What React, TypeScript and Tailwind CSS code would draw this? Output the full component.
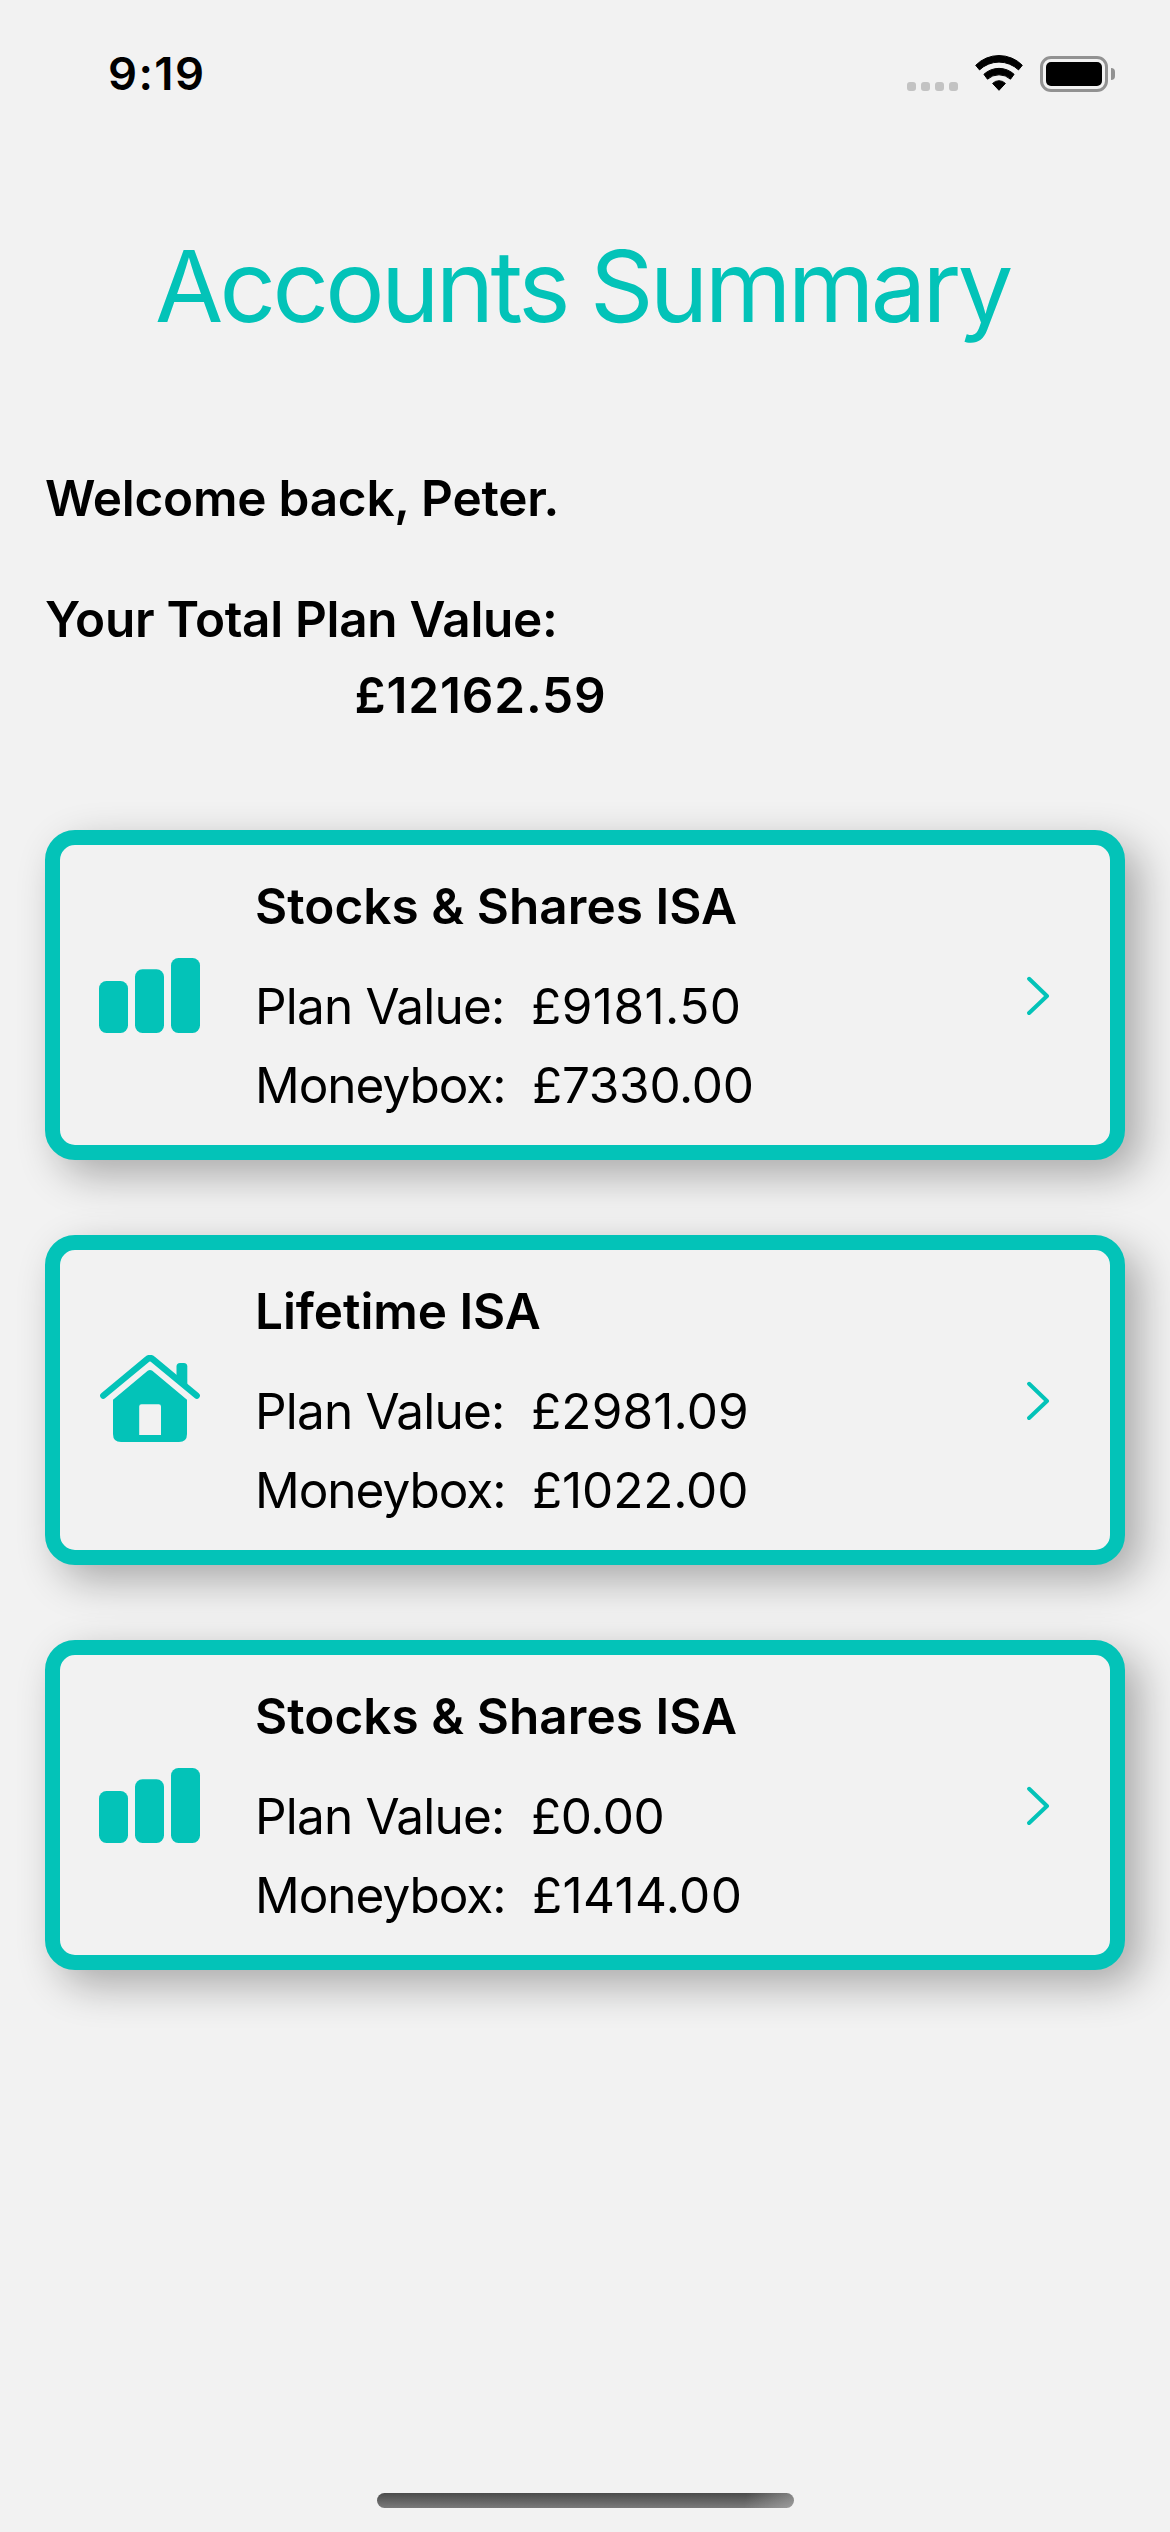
type IconKind = 'bars' | 'house';

interface Row {
  label: string;
  labelClass: string;
  value: string;
  valueClass: string;
}

interface Account {
  name: string;
  nameClass: string;
  icon: IconKind;
  rows: Row[];
}

const planLabel = 'w-[276px] tracking-[-0.81px]';
const boxLabel = 'w-[277px] tracking-[-1.02px]';

const accounts: Account[] = [
  {
    name: 'Stocks & Shares ISA',
    nameClass: 'tracking-[0.05px]',
    icon: 'bars',
    rows: [
      { label: 'Plan Value:', labelClass: planLabel, value: '£9181.50', valueClass: 'tracking-[0.46px]' },
      { label: 'Moneybox:', labelClass: boxLabel, value: '£7330.00', valueClass: 'tracking-[-0.3px]' },
    ],
  },
  {
    name: 'Lifetime ISA',
    nameClass: 'tracking-[-0.06px]',
    icon: 'house',
    rows: [
      { label: 'Plan Value:', labelClass: planLabel, value: '£2981.09', valueClass: 'tracking-[0.13px]' },
      { label: 'Moneybox:', labelClass: boxLabel, value: '£1022.00', valueClass: 'tracking-[-0.15px]' },
    ],
  },
  {
    name: 'Stocks & Shares ISA',
    nameClass: 'tracking-[0.05px]',
    icon: 'bars',
    rows: [
      { label: 'Plan Value:', labelClass: planLabel, value: '£0.00', valueClass: 'tracking-[-0.5px]' },
      { label: 'Moneybox:', labelClass: boxLabel, value: '£1414.00', valueClass: 'tracking-[0.37px]' },
    ],
  },
];

function BarsIcon() {
  return (
    <svg viewBox="0 0 102 90" className="h-[90px] w-[102px] shrink-0" fill="currentColor">
      <rect x="0" y="31" width="29" height="52" rx="7.5" />
      <rect x="36" y="19.3" width="29" height="63.7" rx="7.5" />
      <rect x="72" y="8" width="29" height="75" rx="7.5" />
    </svg>
  );
}

function HouseIcon() {
  return (
    <svg viewBox="0 0 102 90" className="h-[90px] w-[102px] shrink-0" fill="currentColor">
      <path
        d="M4.3 40.6 48.2 4.2Q51 2 53.8 4.2L97.7 40.6"
        fill="none"
        stroke="currentColor"
        strokeWidth="6.4"
        strokeLinecap="round"
        strokeLinejoin="round"
      />
      <path d="M77.5 24V11.5Q77.5 8 81 8H84.8Q88.3 8 88.3 11.5V33.5Z" />
      <path
        fillRule="evenodd"
        d="M14 44.8 48.7 15.8Q51 14 53.3 15.8L88 44.8V79Q88 87 80 87H22Q14 87 14 79ZM42.5 49.3Q40.2 49.3 40.2 51.6V80H62V51.6Q62 49.3 59.7 49.3Z"
      />
    </svg>
  );
}

function Chevron() {
  return (
    <svg
      viewBox="0 0 24 40"
      className="ml-auto h-[40px] w-[24px] shrink-0"
      fill="none"
      stroke="currentColor"
      strokeWidth="4"
      strokeLinecap="round"
      strokeLinejoin="round"
    >
      <path d="M2.1 3.8 20 21 2.1 38" />
    </svg>
  );
}

function AccountCard({ account }: { account: Account }) {
  return (
    <button className="flex h-[330px] w-full items-center rounded-[30px] border-[15px] border-[#03c3b8] bg-[#f2f2f2] pr-[59px] pl-[39px] text-left text-[#03c3b8] shadow-[15px_15px_42px_rgba(0,0,0,0.3)]">
      {account.icon === 'bars' ? <BarsIcon /> : <HouseIcon />}
      <div className="ml-[54px] flex h-full flex-col pt-[31px] text-[49.5px] leading-[60px] whitespace-nowrap text-black">
        <h2 className={`mb-10 font-semibold ${account.nameClass}`}>{account.name}</h2>
        <div className="flex flex-col gap-[19px]">
          {account.rows.map((row) => (
            <div key={row.label} className="flex">
              <span className={row.labelClass}>{row.label}</span>
              <span className={row.valueClass}>{row.value}</span>
            </div>
          ))}
        </div>
      </div>
      <Chevron />
    </button>
  );
}

function StatusBar() {
  return (
    <div className="flex h-[141px] items-start justify-between pt-[44px] pr-[55px] pl-[108px]">
      <span className="text-[45.4px] leading-[60px] font-semibold tracking-[1.43px]">9:19</span>
      <div className="flex items-end pt-[11px]">
        <div className="mb-[1px] flex gap-[5px]">
          <span className="size-[9px] rounded-[3px] bg-[#c3c3c3]" />
          <span className="size-[9px] rounded-[3px] bg-[#c3c3c3]" />
          <span className="size-[9px] rounded-[3px] bg-[#c3c3c3]" />
          <span className="size-[9px] rounded-[3px] bg-[#c3c3c3]" />
        </div>
        <svg viewBox="0 0 48 37" className="ml-[17px] h-[37px] w-[48px]" stroke="black" strokeWidth="1" strokeLinejoin="round">
          <path d="M.7 10.3A32.7 32.7 0 0 1 47.3 10.3L43.5 14.9A28.3 28.3 0 0 0 4.5 14.9Z" />
          <path d="M8.9 19.3A22.2 22.2 0 0 1 39.1 19.3L35.5 24.2A17.2 17.2 0 0 0 12.5 24.2Z" />
          <path d="M17.6 28.4A9 9 0 0 1 30.4 28.4L24 35.3Z" />
        </svg>
        <div className="ml-[17px] flex h-[36px] w-[68px] rounded-[11px] border-[3px] border-[#929292] p-[3px]">
          <div className="flex-1 rounded-[5px] bg-black" />
        </div>
        <div className="mb-[12px] ml-[3px] h-[12px] w-[4px] rounded-r-full bg-[#929292]" />
      </div>
    </div>
  );
}

export default function App() {
  return (
    <div className="flex h-[2532px] w-[1170px] flex-col overflow-hidden bg-[#f2f2f2] font-['Inter',sans-serif] text-black">
      <StatusBar />
      <h1 className="mt-[85px] pl-[155px] text-[99px] leading-[120px] font-normal tracking-[-3.7px] [word-spacing:-1px] whitespace-nowrap text-[#03c3b8]">
        Accounts Summary
      </h1>
      <main className="mt-[122px] flex flex-1 flex-col px-[45px]">
        <div className="text-[49.5px] leading-[60px] font-semibold">
          <p className="tracking-[-0.25px]">Welcome back, Peter.</p>
          <p className="mt-[61px] tracking-[-0.32px]">Your Total Plan Value:</p>
          <p className="mt-[16px] pl-[309.5px] tracking-[0.84px]">£12162.59</p>
        </div>
        <div className="mt-[105px] flex flex-col gap-[75px]">
          {accounts.map((account, index) => (
            <AccountCard key={index} account={account} />
          ))}
        </div>
      </main>
      <div className="mb-6 h-[15px] w-[417px] self-center rounded-full bg-[linear-gradient(100deg,transparent_88%,rgba(200,200,200,0.45)_100%),linear-gradient(to_bottom,#4b4b4b,#7a7a7a)]" />
    </div>
  );
}
